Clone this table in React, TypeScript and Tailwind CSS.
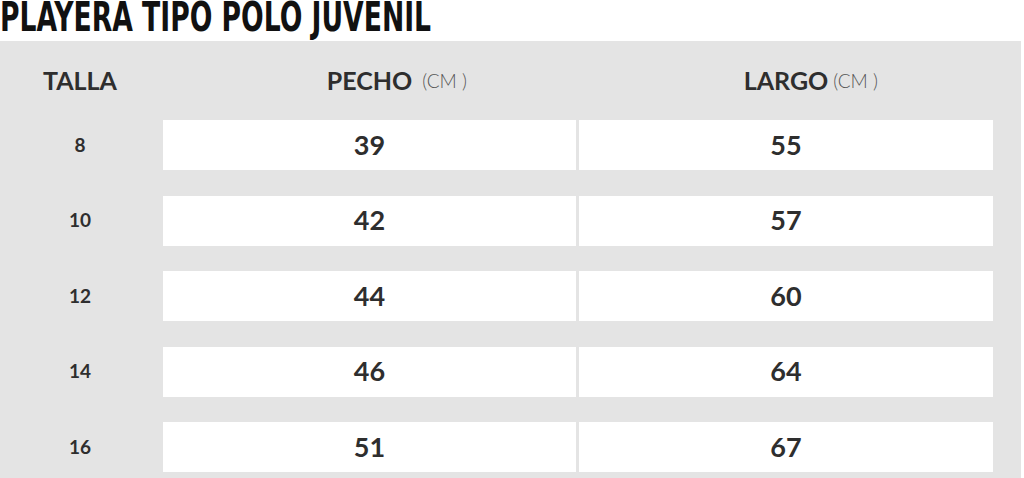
import React from 'react';

const rows = [
  { talla: '8', pecho: '39', largo: '55' },
  { talla: '10', pecho: '42', largo: '57' },
  { talla: '12', pecho: '44', largo: '60' },
  { talla: '14', pecho: '46', largo: '64' },
  { talla: '16', pecho: '51', largo: '67' },
];

const HeadCell: React.FC<{ label: string; gap: string }> = ({ label, gap }) => (
  <div className="flex items-center justify-center">
    <span className="relative text-[25px] font-bold text-[#2e2e2e]">
      {label}
      <span className={`absolute left-full top-1/2 -translate-y-1/2 ${gap} text-[19px] font-light text-[#555] whitespace-nowrap`}>
        (CM )
      </span>
    </span>
  </div>
);

export default function App() {
  return (
    <div className="w-[1024px] h-[478px] bg-white overflow-hidden" style={{ fontFamily: 'Lato, "Open Sans", sans-serif' }}>
      {/* Title */}
      <div className="h-[41px] pt-[1px]">
        <h1
          className="w-max origin-top-left scale-x-[0.74] text-[40px] leading-[32px] font-bold text-[#111] whitespace-nowrap"
          style={{ fontFamily: '"DejaVu Sans Condensed", "DejaVu Sans", sans-serif' }}
        >
          PLAYERA TIPO POLO JUVENIL
        </h1>
      </div>

      {/* Table */}
      <div className="w-[1021px] h-[437px] bg-[#e4e4e4]">
        <div className="grid grid-cols-[160px_413px_414px] gap-x-[3px] h-[79px]">
          <div className="flex items-center justify-center text-[25px] font-bold text-[#2e2e2e]">TALLA</div>
          <HeadCell label="PECHO" gap="ml-[10px]" />
          <HeadCell label="LARGO" gap="ml-[5px]" />
        </div>
        <div className="flex flex-col gap-y-[25.5px]">
          {rows.map(r => (
            <div key={r.talla} className="grid grid-cols-[160px_413px_414px] gap-x-[3px] h-[50px]">
              <div className="flex items-center justify-center text-[19px] font-bold text-[#2e2e2e]">{r.talla}</div>
              <div className="bg-white flex items-center justify-center text-[27px] font-bold text-[#2e2e2e]">{r.pecho}</div>
              <div className="bg-white flex items-center justify-center text-[27px] font-bold text-[#2e2e2e]">{r.largo}</div>
            </div>
          ))}
        </div>
      </div>
    </div>
  );
}
